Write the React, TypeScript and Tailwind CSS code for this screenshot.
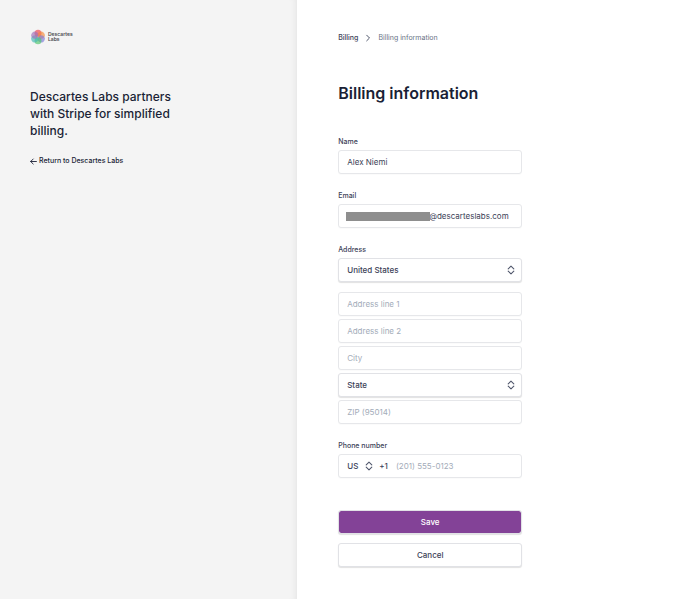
import { useId } from "react";
import type { ReactNode } from "react";
import { clsx } from "clsx";

const petals = [
  { angle: 0, color: "#ee3f4a" },
  { angle: 60, color: "#f58a3a" },
  { angle: 120, color: "#7d78d8" },
  { angle: 180, color: "#4fc46a" },
  { angle: 240, color: "#45b9b4" },
  { angle: 300, color: "#a070b8" },
];

const fieldClass =
  "block h-6 w-full rounded-[3px] border border-[#e6e7ea] bg-white px-2 text-[8px] text-[#3c4257] shadow-[0_1px_1px_rgba(0,0,0,0.02)] outline-none placeholder:text-[#a3acb9]";

const raisedClass =
  "block h-6 w-full rounded-[3px] border border-[#e1e2e6] bg-white text-[8px] font-medium text-[#3c4257] shadow-[0_1px_1px_rgba(0,0,0,0.12)] outline-none";

function Logo() {
  return (
    <div className="flex items-center gap-[2px]">
      <svg viewBox="0 0 32 32" className="size-4" aria-hidden="true">
        {petals.map((petal) => (
          <circle
            key={petal.angle}
            cx="16"
            cy="8.5"
            r="7"
            fill={petal.color}
            fillOpacity="0.65"
            transform={`rotate(${petal.angle} 16 16)`}
          />
        ))}
      </svg>
      <p className="text-[5px] leading-[5px] font-semibold text-[#4a4a4f]">
        Descartes
        <br />
        Labs
      </p>
    </div>
  );
}

function SortIcon({ className }: { className?: string }) {
  return (
    <svg
      viewBox="0 0 8 10"
      className={clsx("pointer-events-none h-[10px] w-2", className)}
      fill="none"
      stroke="#4f566b"
      strokeWidth="1.1"
      strokeLinecap="round"
      strokeLinejoin="round"
      aria-hidden="true"
    >
      <path d="M1.2 3.8 4 1.2l2.8 2.6M1.2 6.2 4 8.8l2.8-2.6" />
    </svg>
  );
}

function Label({ htmlFor, children }: { htmlFor: string; children: ReactNode }) {
  return (
    <label
      htmlFor={htmlFor}
      className="mb-[3px] block text-[7px] leading-[10px] font-medium text-[#3c4257]"
    >
      {children}
    </label>
  );
}

function SelectField({ id, label, options }: { id?: string; label: string; options: string[] }) {
  return (
    <div className="relative">
      <select id={id} aria-label={label} className={clsx(raisedClass, "appearance-none px-2")}>
        {options.map((option) => (
          <option key={option}>{option}</option>
        ))}
      </select>
      <SortIcon className="absolute top-[7px] right-[7px]" />
    </div>
  );
}

function Sidebar() {
  return (
    <aside className="w-[43.2%] bg-[#f4f4f4] px-[30px] pt-[29px] shadow-[inset_-6px_0_6px_-5px_rgba(0,0,0,0.07)]">
      <Logo />
      <p className="mt-[43px] max-w-36 text-[12px] leading-[17px] font-medium text-[#1a1f36]">
        Descartes Labs partners with Stripe for simplified billing.
      </p>
      <a
        href="#"
        className="mt-[17px] inline-flex items-center gap-[2px] text-[7px] leading-[10px] font-medium text-[#1a1f36]"
      >
        <svg
          viewBox="0 0 7 7"
          className="size-[7px]"
          fill="none"
          stroke="currentColor"
          strokeWidth="0.9"
          strokeLinecap="round"
          strokeLinejoin="round"
          aria-hidden="true"
        >
          <path d="M6.4 3.5H.7M3.2 1 .7 3.5 3.2 6" />
        </svg>
        Return to Descartes Labs
      </a>
    </aside>
  );
}

export default function App() {
  const id = useId();

  return (
    <div className="flex min-h-screen bg-white font-['Inter',sans-serif]">
      <Sidebar />
      <main className="flex-1 px-[41px] pt-8 pb-8">
        <nav className="flex items-center gap-[7px] text-[7px] leading-[11px]" aria-label="Breadcrumb">
          <a href="#" className="font-medium text-[#3c4257]">
            Billing
          </a>
          <svg
            viewBox="0 0 6 8"
            className="h-2 w-[6px]"
            fill="none"
            stroke="#4f566b"
            strokeLinecap="round"
            strokeLinejoin="round"
            aria-hidden="true"
          >
            <path d="M1.7 1.2 4.5 4 1.7 6.8" />
          </svg>
          <span className="text-[#697386]">Billing information</span>
        </nav>

        <h1 className="mt-10 text-[16px] leading-5 font-semibold text-[#1a1f36]">
          Billing information
        </h1>

        <form className="mt-[34px] max-w-[184px]" onSubmit={(e) => e.preventDefault()}>
          <Label htmlFor={`${id}-name`}>Name</Label>
          <input id={`${id}-name`} type="text" defaultValue="Alex Niemi" className={fieldClass} />

          <div className="mt-[17px]">
            <Label htmlFor={`${id}-email`}>Email</Label>
            <div className="relative">
              <input
                id={`${id}-email`}
                type="text"
                defaultValue="@descarteslabs.com"
                className={clsx(fieldClass, "pl-[90px]!")}
              />
              <span className="absolute top-2 left-2 h-[9px] w-[84px] bg-[#8e8e8e]" />
            </div>
          </div>

          <div className="mt-[17px]">
            <Label htmlFor={`${id}-country`}>Address</Label>
            <SelectField id={`${id}-country`} label="Country" options={["United States", "Canada"]} />
            <div className="mt-[10px] space-y-[3px]">
              <input aria-label="Address line 1" placeholder="Address line 1" className={fieldClass} />
              <input aria-label="Address line 2" placeholder="Address line 2" className={fieldClass} />
              <input aria-label="City" placeholder="City" className={fieldClass} />
              <SelectField label="State" options={["State", "California", "New Mexico"]} />
              <input aria-label="ZIP" placeholder="ZIP (95014)" className={fieldClass} />
            </div>
          </div>

          <div className="mt-[17px]">
            <Label htmlFor={`${id}-phone`}>Phone number</Label>
            <div className={clsx(fieldClass, "flex! items-center")}>
              <div className="relative">
                <select
                  aria-label="Country code"
                  className="block w-7 appearance-none bg-transparent text-[8px] font-medium outline-none"
                >
                  <option>US</option>
                  <option>CA</option>
                </select>
                <SortIcon className="absolute top-[1px] right-[2px]" />
              </div>
              <span className="ml-1 font-medium">+1</span>
              <input
                id={`${id}-phone`}
                type="tel"
                placeholder="(201) 555-0123"
                className="ml-2 w-full min-w-0 flex-1 bg-transparent outline-none placeholder:text-[#a3acb9]"
              />
            </div>
          </div>

          <button type="submit" className={clsx(raisedClass, "mt-8 bg-[#834297]! bg-clip-padding text-white!")}>
            Save
          </button>
          <button type="button" className={clsx(raisedClass, "mt-[9px]")}>
            Cancel
          </button>
        </form>
      </main>
    </div>
  );
}
